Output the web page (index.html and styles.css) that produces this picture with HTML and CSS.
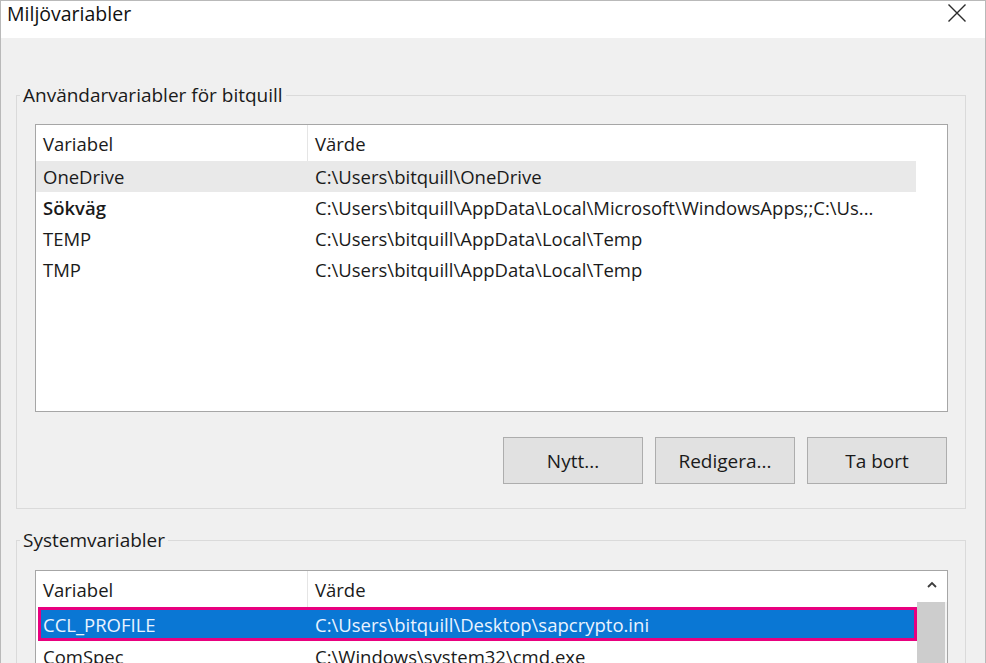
FILE: index.html
```html
<!DOCTYPE html>
<html lang="sv">
<head>
<meta charset="utf-8">
<title>Miljövariabler</title>
<link rel="stylesheet" href="styles.css">
</head>
<body>
<div class="window">
  <div class="titlebar">
    <span class="title">Miljövariabler</span>
    <svg class="close" width="20" height="20" viewBox="0 0 20 20"><path d="M1.5 1.5 L18.5 18.5 M18.5 1.5 L1.5 18.5" stroke="#2b2b2b" stroke-width="1.4" fill="none"/></svg>
  </div>
  <div class="content">
    <fieldset class="group group-user">
      <legend>Användarvariabler för bitquill</legend>
      <div class="list list-user">
        <div class="list-main">
          <div class="row header"><div class="c1">Variabel</div><div class="c2">Värde</div></div>
          <div class="row hover"><div class="c1">OneDrive</div><div class="c2">C:\Users\bitquill\OneDrive</div></div>
          <div class="row"><div class="c1 strong">Sökväg</div><div class="c2">C:\Users\bitquill\AppData\Local\Microsoft\WindowsApps;;C:\Us...</div></div>
          <div class="row"><div class="c1">TEMP</div><div class="c2">C:\Users\bitquill\AppData\Local\Temp</div></div>
          <div class="row"><div class="c1">TMP</div><div class="c2">C:\Users\bitquill\AppData\Local\Temp</div></div>
        </div>
      </div>
      <div class="buttons">
        <button class="btn">Nytt...</button>
        <button class="btn">Redigera...</button>
        <button class="btn">Ta bort</button>
      </div>
    </fieldset>
    <fieldset class="group group-sys">
      <legend>Systemvariabler</legend>
      <div class="list list-sys">
        <div class="list-main">
          <div class="row header"><div class="c1">Variabel</div><div class="c2">Värde</div></div>
          <div class="row selected"><div class="c1">CCL_PROFILE</div><div class="c2">C:\Users\bitquill\Desktop\sapcrypto.ini</div></div>
          <div class="row"><div class="c1">ComSpec</div><div class="c2">C:\Windows\system32\cmd.exe</div></div>
        </div>
        <div class="scrollbar">
          <div class="sb-arrow">
            <svg width="10" height="7" viewBox="0 0 10 7"><path d="M1 6 L5 2 L9 6" stroke="#3c3c3c" stroke-width="1.8" fill="none"/></svg>
          </div>
          <div class="sb-thumb"></div>
        </div>
      </div>
    </fieldset>
  </div>
</div>
</body>
</html>
```
FILE: styles.css
```css
html, body {
  margin: 0;
  padding: 0;
  background: #ffffff;
}

body {
  font-family: "Open Sans", "Noto Sans", "Liberation Sans", sans-serif;
  color: #1a1a1a;
}

.window {
  width: 986px;
  height: 663px;
  box-sizing: border-box;
  border: 1px solid #b9b9b9;
  border-bottom: none;
  background: #f0f0f0;
  overflow: hidden;
  display: flex;
  flex-direction: column;
}

.titlebar {
  height: 37px;
  flex: none;
  background: #ffffff;
  display: flex;
  align-items: center;
  justify-content: space-between;
  padding: 0 18px 0 6px;
}

.title {
  font-size: 19.5px;
  line-height: 26px;
  margin-top: -11px;
  color: #111;
}

.close {
  display: block;
  margin-top: -13px;
}

.content {
  padding: 45px 0 0 15px;
}

.group {
  margin: 0;
  padding: 0;
  width: 950px;
  box-sizing: border-box;
  border: 1px solid #dadada;
  min-width: 0;
}

.group legend {
  font-size: 19px;
  line-height: 24px;
  padding: 0 3px;
  margin-left: -15px;
  color: #1a1a1a;
}

.group-user {
  padding: 17px 17px 24px 18px;
}

.group-sys {
  margin-top: 19px;
  padding: 18px 17px 0 18px;
  height: 200px;
}

.list {
  width: 913px;
  box-sizing: border-box;
  border: 1px solid #a6a6a6;
  background: #ffffff;
  display: flex;
}

.list-user {
  height: 288px;
}

.list-sys {
  height: 200px;
}

.list-main {
  width: 881px;
  flex: none;
}

.row {
  display: grid;
  grid-template-columns: 271px 1fr;
  height: 31px;
  align-items: center;
  font-size: 18.5px;
  white-space: nowrap;
}

.row .c1 {
  padding-left: 7px;
  overflow: hidden;
}

.row .c1.strong {
  font-weight: 600;
}

.row .c2 {
  padding-left: 8px;
  overflow: hidden;
}

.row.header {
  height: 36px;
  align-items: stretch;
  width: 880px;
}

.row.header .c1,
.row.header .c2 {
  display: flex;
  align-items: center;
}

.row.header .c2 {
  border-left: 1px solid #e5e5e5;
  padding-left: 7px;
}

.list-user .row:not(.header) {
  width: 880px;
}

.row.hover {
  background: #e9e9e9;
}

.row.selected {
  height: 34px;
  margin-left: 2px;
  width: 879px;
  grid-template-columns: 269px 1fr;
  background: #0a77d4;
  color: #e9f3ff;
  outline: 3px solid #e8007f;
  outline-offset: -3px;
  box-sizing: border-box;
}

.row.selected .c1 {
  padding-left: 5px;
}

.scrollbar {
  width: 30px;
  flex: none;
  display: flex;
  flex-direction: column;
  background: #f4f4f4;
}

.sb-arrow {
  height: 31px;
  background: #ffffff;
  display: flex;
  align-items: center;
  justify-content: center;
  padding-bottom: 4px;
  box-sizing: border-box;
}

.sb-thumb {
  margin: 0 2px 0 0;
  flex: 1;
  background: #cdcdcd;
}

.buttons {
  display: flex;
  justify-content: flex-end;
  gap: 12px;
  margin-top: 25px;
  padding-right: 1px;
}

.btn {
  width: 140px;
  height: 47px;
  box-sizing: border-box;
  border: 1px solid #adadad;
  background: #e1e1e1;
  font-family: inherit;
  font-size: 19px;
  color: #1a1a1a;
  padding: 0;
  margin: 0;
}
```
